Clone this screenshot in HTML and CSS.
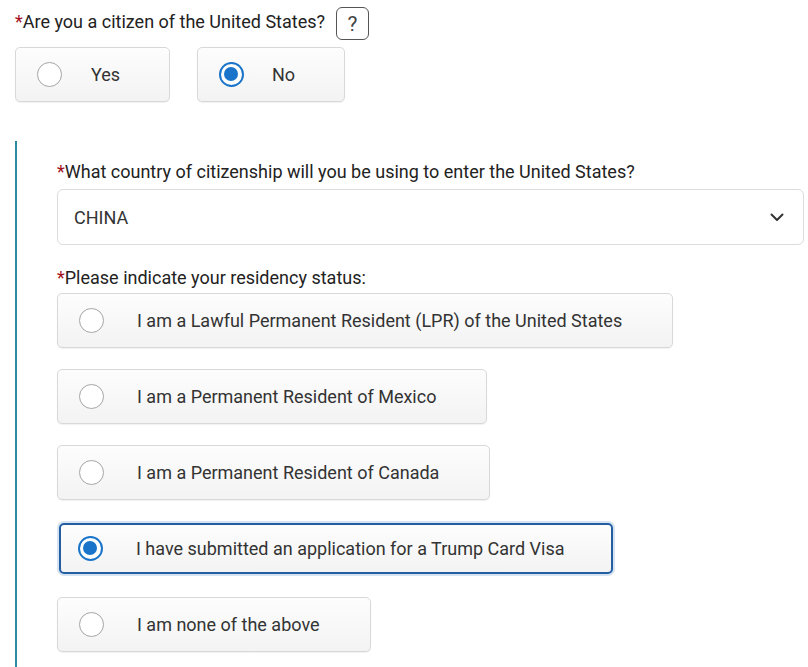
FILE: index.html
```html
<!DOCTYPE html>
<html lang="en">
<head>
<meta charset="utf-8">
<title>Citizenship</title>
<link rel="stylesheet" href="styles.css">
</head>
<body>
<div class="page">
  <div class="q-row">
    <span class="q-label"><span class="req">*</span>Are you a citizen of the United States?</span>
    <span class="help">?</span>
  </div>
  <div class="yn">
    <label class="opt opt-yes"><span class="radio"></span><span class="opt-text">Yes</span></label>
    <label class="opt opt-no"><span class="radio checked"></span><span class="opt-text">No</span></label>
  </div>

  <div class="section">
    <div class="label"><span class="req">*</span>What country of citizenship will you be using to enter the United States?</div>
    <div class="select">
      <span class="select-value">CHINA</span>
      <svg class="chev" width="14" height="9" viewBox="0 0 14 9"><path d="M1.5 1.5 L7 7 L12.5 1.5" fill="none" stroke="#333" stroke-width="2" stroke-linecap="round" stroke-linejoin="round"/></svg>
    </div>

    <div class="label label-res"><span class="req">*</span>Please indicate your residency status:</div>
    <div class="options">
      <label class="opt row"><span class="radio"></span><span class="opt-text">I am a Lawful Permanent Resident (LPR) of the United States</span></label>
      <label class="opt row"><span class="radio"></span><span class="opt-text">I am a Permanent Resident of Mexico</span></label>
      <label class="opt row"><span class="radio"></span><span class="opt-text">I am a Permanent Resident of Canada</span></label>
      <label class="opt row selected"><span class="radio checked"></span><span class="opt-text">I have submitted an application for a Trump Card Visa</span></label>
      <label class="opt row"><span class="radio"></span><span class="opt-text">I am none of the above</span></label>
    </div>
  </div>
</div>
</body>
</html>
```

FILE: styles.css
```css
* { box-sizing: border-box; }
html, body { margin: 0; padding: 0; background: #fff; }
body {
  font-family: Roboto, "Liberation Sans", Arial, sans-serif;
  font-size: 18px;
  color: #333;
}
.page {
  padding: 7px 0 0 15px;
  width: 808px;
  height: 667px;
  overflow: hidden;
}
.req { color: #a3111b; }
.q-row {
  display: flex;
  align-items: center;
  height: 33px;
}
.q-label { color: #222; line-height: 20px; margin-top: -3px; }
.help {
  margin-left: 11px;
  width: 33px;
  height: 33px;
  border: 1px solid #555;
  border-radius: 6px;
  display: flex;
  align-items: center;
  justify-content: center;
  font-size: 21px;
  color: #444;
}
.yn {
  display: flex;
  gap: 27px;
  margin-top: 7px;
}
.opt {
  display: inline-flex;
  align-items: center;
  height: 55px;
  padding: 0 50px 0 21px;
  border: 1px solid #d8d8d8;
  border-radius: 5px;
  background: linear-gradient(#fdfdfd, #f3f3f3);
  box-shadow: 0 1px 1px rgba(0,0,0,0.06);
  color: #333;
}
.opt-yes { width: 155px; }
.opt-no { width: 148px; }
.radio {
  flex: none;
  width: 25px;
  height: 25px;
  border-radius: 50%;
  border: 1.5px solid #a5a5a5;
  background: #fff;
  position: relative;
}
.radio.checked {
  border: 2.5px solid #1a74c9;
}
.radio.checked::after {
  content: "";
  position: absolute;
  left: 3px; top: 3px;
  width: 14px; height: 14px;
  border-radius: 50%;
  background: #1a74c9;
}
.opt-yes .radio { margin-right: 29px; }
.opt-no .radio { margin-right: 28px; }

.section {
  margin-top: 39px;
  border-left: 2px solid #2b8ba3;
  padding: 21px 4px 20px 40px;
  min-height: 540px;
}
.label { color: #222; line-height: 20px; }
.select {
  margin-top: 7px;
  height: 56px;
  border: 1px solid #dcdcdc;
  border-radius: 6px;
  background: #fff;
  display: flex;
  align-items: center;
  justify-content: space-between;
  padding: 0 19px 0 16px;
}
.select-value { color: #333; }
.label-res { margin-top: 23px; }
.options {
  margin-top: 5px;
  display: flex;
  flex-direction: column;
  align-items: flex-start;
  gap: 21px;
}
.row .radio { margin-right: 33px; }
.row.selected {
  margin: 2px;
  height: 51px;
  border: 2px solid #235ea3;
  border-radius: 5px;
  padding-left: 17px;
  padding-right: 46px;
  box-shadow: 0 0 0 2px #d6e3f1;
}
```
